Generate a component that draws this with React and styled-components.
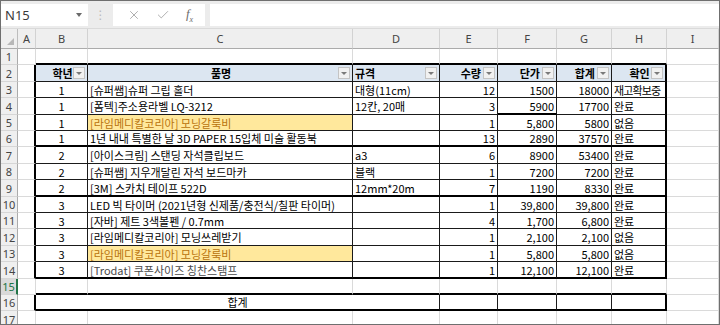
import React from 'react';
import styled, { createGlobalStyle, css } from 'styled-components';
import { X, Check } from 'lucide-react';

const Global = createGlobalStyle`
  html, body { margin: 0; padding: 0; background: #fff; }
  body { font-family: "Noto Sans CJK KR", "Noto Sans", sans-serif; }
  #root { width: 720px; height: 325px; }
`;

const Frame = styled.div`
  width: 720px;
  height: 325px;
  box-sizing: border-box;
  border: 1px solid #6f6f6f;
  overflow: hidden;
  background: #fff;
  display: flex;
  flex-direction: column;
`;

const FormulaBar = styled.div`
  height: 28px;
  flex: none;
  box-sizing: border-box;
  display: flex;
  align-items: center;
  background: #ececec;
  border-bottom: 1px solid #dadada;
`;

const NameBox = styled.div`
  width: 87px;
  height: 22px;
  background: #fff;
  display: flex;
  align-items: center;
  justify-content: space-between;
  box-sizing: border-box;
  padding: 0 6px 0 4px;
  font-family: "Noto Sans", "Liberation Sans", sans-serif;
  font-size: 13px;
  color: #3a3a3a;
`;

const Caret = styled.span`
  width: 0;
  height: 0;
  border-left: 3px solid transparent;
  border-right: 3px solid transparent;
  border-top: 4px solid #6a6a6a;
`;

const Grip = styled.div`
  width: 25px;
  text-align: center;
  color: #b9b9b9;
  font-size: 12px;
  font-family: "DejaVu Sans", sans-serif;
`;

const FxBox = styled.div`
  width: 92px;
  height: 22px;
  background: #fff;
  display: flex;
  align-items: center;
  justify-content: space-around;
  padding: 0 4px 0 6px;
  box-sizing: border-box;
  color: #a3a3a3;
`;

const Fx = styled.span`
  font-family: "Liberation Serif", serif;
  font-style: italic;
  font-size: 13px;
  color: #6d6d6d;
  sub { font-size: 8px; }
`;

const FormulaInput = styled.div`
  flex: 1;
  height: 22px;
  margin-left: 5px;
  background: #fff;
`;

const Sheet = styled.div`
  display: grid;
  grid-template-columns: 17px 18px 52px 265px 87px 58px 59px 55px 55px 1fr;
  grid-template-rows: ${(p) => p.$rows};
  font-size: 11px;
  color: #000;
`;

const HeadBase = css`
  background: #efefef;
  color: #444;
  font-family: "Noto Sans", "Liberation Sans", sans-serif;
  font-size: 11px;
  display: flex;
  align-items: center;
  justify-content: center;
  box-sizing: border-box;
`;

const Corner = styled.div`
  ${HeadBase};
  border-right: 1px solid #bdbdbd;
  border-bottom: 1px solid #ababab;
  align-items: flex-end;
  justify-content: flex-end;
  padding: 0 3px 3px 0;
`;

const ColHead = styled.div`
  ${HeadBase};
  border-right: 1px solid #d2d2d2;
  border-bottom: 1px solid #ababab;
`;

const RowHead = styled.div`
  ${HeadBase};
  border-right: 1px solid #ababab;
  border-bottom: 1px solid #d6d6d6;
  ${(p) =>
    p.$active &&
    css`
      background: #d9d9d9;
      color: #217346;
      border-right: 2px solid #217346;
    `}
`;

const borderCss = (kind) => {
  if (kind === 'thick') return '2px solid #000';
  if (kind === 'thin') return '1px solid #1a1a1a';
  return '1px solid #dadada';
};

const Cell = styled.div`
  box-sizing: border-box;
  border-right: ${(p) => borderCss(p.$br)};
  border-bottom: ${(p) => borderCss(p.$bb)};
  background: ${(p) => p.$bg || 'transparent'};
  color: ${(p) => p.$color || '#000'};
  font-weight: ${(p) => (p.$bold ? 700 : 400)};
  letter-spacing: ${(p) => (p.$tight ? '-0.9px' : 'normal')};
  text-align: ${(p) => p.$align || 'left'};
  padding: 0 2px 0 2px;
  white-space: nowrap;
  display: flex;
  align-items: center;
  justify-content: ${(p) =>
    p.$align === 'right' ? 'flex-end' : p.$align === 'center' ? 'center' : 'flex-start'};
  grid-column: ${(p) => (p.$span ? `span ${p.$span}` : 'auto')};
  min-width: 0;
`;

const HeaderCell = styled(Cell)`
  background: #dce6f1;
  font-weight: 700;
  padding: 0 2px 0 2px;
  justify-content: stretch;
`;

const HeaderLabel = styled.span`
  flex: 1;
  text-align: ${(p) => p.$align};
  padding-left: ${(p) => (p.$align === 'center' ? '14px' : '0')};
  padding-right: ${(p) => (p.$align === 'right' ? '2px' : '0')};
`;

const FilterBtn = styled.span`
  width: 12px;
  height: 12px;
  flex: none;
  box-sizing: border-box;
  background: #f1f1f1;
  border: 1px solid #c4c4c4;
  display: flex;
  align-items: center;
  justify-content: center;
`;

const FilterCaret = styled.span`
  width: 0;
  height: 0;
  border-left: 3px solid transparent;
  border-right: 3px solid transparent;
  border-top: 3px solid #7a7a7a;
`;

const cols = ['A', 'B', 'C', 'D', 'E', 'F', 'G', 'H', 'I'];

const data = [
  { g: 1, name: '[슈퍼쌤]슈퍼 그립 홀더', spec: '대형(11cm)', qty: 12, price: '1500', total: '18000', st: '재고확보중' },
  { g: 1, name: '[폼텍]주소용라벨 LQ-3212', spec: '12칸, 20매', qty: 3, price: '5900', total: '17700', st: '완료' },
  { g: 1, name: '[라임메디칼코리아] 모닝갈룩비', spec: '', qty: 1, price: '5,800', total: '5800', st: '없음', hl: true },
  { g: 1, name: '1년 내내 특별한 날 3D PAPER 15입체 미술 활동북', spec: '', qty: 13, price: '2890', total: '37570', st: '완료' },
  { g: 2, name: '[아이스크림] 스탠딩 자석클립보드', spec: 'a3', qty: 6, price: '8900', total: '53400', st: '완료' },
  { g: 2, name: '[슈퍼쌤] 지우개달린 자석 보드마카', spec: '블랙', qty: 1, price: '7200', total: '7200', st: '완료' },
  { g: 2, name: '[3M] 스카치 테이프 522D', spec: '12mm*20m', qty: 7, price: '1190', total: '8330', st: '완료' },
  { g: 3, name: 'LED 빅 타이머 (2021년형 신제품/충전식/칠판 타이머)', spec: '', qty: 1, price: '39,800', total: '39,800', st: '완료' },
  { g: 3, name: '[자바] 제트 3색볼펜 / 0.7mm', spec: '', qty: 4, price: '1,700', total: '6,800', st: '완료' },
  { g: 3, name: '[라임메디칼코리아] 모닝쓰레받기', spec: '', qty: 1, price: '2,100', total: '2,100', st: '없음' },
  { g: 3, name: '[라임메디칼코리아] 모닝갈룩비', spec: '', qty: 1, price: '5,800', total: '5,800', st: '없음', hl: true },
  { g: 3, name: '[Trodat] 쿠폰사이즈 칭찬스탬프', spec: '', qty: 1, price: '12,100', total: '12,100', st: '완료', gray: true },
];

const headers = [
  { t: '학년', a: 'center' },
  { t: '품명', a: 'center' },
  { t: '규격', a: 'left' },
  { t: '수량', a: 'right' },
  { t: '단가', a: 'right' },
  { t: '합계', a: 'right' },
  { t: '확인', a: 'center' },
];

const inTable = (r) => r >= 2 && r <= 14;

// c: 1=A ... 9=I
const borders = (r, c) => {
  let right = 'grid';
  let bottom = 'grid';
  if (c === 1) {
    if (inTable(r) || r === 16) right = 'thick';
  } else if (c >= 2 && c <= 7) {
    if (inTable(r) || r === 16) right = 'thin';
  } else if (c === 8) {
    if (inTable(r) || r === 16) right = 'thick';
  }
  if (c >= 2 && c <= 8) {
    if (r === 1 || r === 6 || r === 9 || r === 14 || r === 15 || r === 16) bottom = 'thick';
    else if (inTable(r)) bottom = 'thin';
    if (r === 4 && c === 6) bottom = 'thick';
  }
  return { right, bottom };
};

const HL_BG = '#ffe89c';
const HL_FG = '#b8730c';

const rowHeights = Array.from(
  { length: 17 },
  (_, i) => Math.round(49 + (i + 1) * 16.4) - Math.round(49 + i * 16.4)
);

function C({ r, c, children, ...rest }) {
  const b = borders(r, c);
  return (
    <Cell $br={b.right} $bb={b.bottom} {...rest}>
      {children}
    </Cell>
  );
}

function renderRow(r) {
  const out = [];
  out.push(
    <RowHead key={`rh${r}`} $active={r === 15}>
      {r}
    </RowHead>
  );
  out.push(<C key={`a${r}`} r={r} c={1} />);
  if (r === 2) {
    headers.forEach((h, i) => {
      const b = borders(r, i + 2);
      out.push(
        <HeaderCell key={`h${i}`} $br={b.right} $bb={b.bottom}>
          <HeaderLabel $align={h.a}>{h.t}</HeaderLabel>
          <FilterBtn>
            <FilterCaret />
          </FilterBtn>
        </HeaderCell>
      );
    });
  } else if (r >= 3 && r <= 14) {
    const d = data[r - 3];
    out.push(<C key={`b${r}`} r={r} c={2} $align="center">{d.g}</C>);
    out.push(
      <C
        key={`c${r}`}
        r={r}
        c={3}
        $bg={d.hl ? HL_BG : undefined}
        $color={d.hl ? HL_FG : d.gray ? '#4a4a4a' : undefined}
      >
        {d.name}
      </C>
    );
    out.push(<C key={`d${r}`} r={r} c={4}>{d.spec}</C>);
    out.push(<C key={`e${r}`} r={r} c={5} $align="right">{d.qty}</C>);
    out.push(<C key={`f${r}`} r={r} c={6} $align="right">{d.price}</C>);
    out.push(<C key={`g${r}`} r={r} c={7} $align="right">{d.total}</C>);
    out.push(
      <C key={`hh${r}`} r={r} c={8} $tight={d.st.length > 3}>
        {d.st}
      </C>
    );
  } else if (r === 16) {
    out.push(
      <C key="sum" r={r} c={4} $span={3} $align="center">
        합계
      </C>
    );
    [5, 6, 7, 8].forEach((c) => out.push(<C key={`s${c}`} r={r} c={c} />));
  } else {
    [2, 3, 4, 5, 6, 7, 8].forEach((c) => out.push(<C key={`x${r}${c}`} r={r} c={c} />));
  }
  out.push(<C key={`i${r}`} r={r} c={9} />);
  return out;
}

export default function App() {
  const rows = `20px ${rowHeights.map((h) => `${h}px`).join(' ')}`;
  return (
    <>
      <Global />
      <Frame>
        <FormulaBar>
          <NameBox>
            N15
            <Caret />
          </NameBox>
          <Grip>⋮</Grip>
          <FxBox>
            <X size={14} strokeWidth={1.5} />
            <Check size={14} strokeWidth={1.5} />
            <Fx>
              f<sub>x</sub>
            </Fx>
          </FxBox>
          <FormulaInput />
        </FormulaBar>
        <Sheet $rows={rows}>
          <Corner>
            <svg width="7" height="7" viewBox="0 0 7 7">
              <polygon points="7,0 7,7 0,7" fill="#b7b7b7" />
            </svg>
          </Corner>
          {cols.map((c) => (
            <ColHead key={c}>{c}</ColHead>
          ))}
          {Array.from({ length: 17 }, (_, i) => renderRow(i + 1))}
        </Sheet>
      </Frame>
    </>
  );
}
